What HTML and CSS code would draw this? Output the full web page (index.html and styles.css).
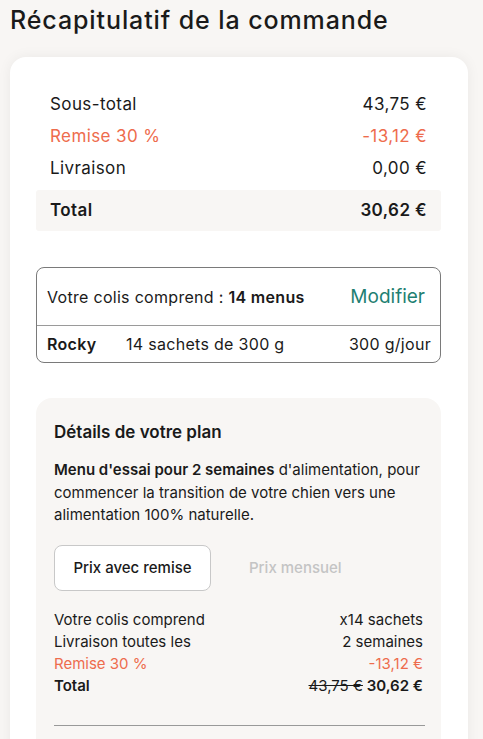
FILE: index.html
```html
<!DOCTYPE html>
<html lang="fr">
  <head>
    <meta charset="UTF-8" />
    <meta name="viewport" content="width=device-width, initial-scale=1.0" />
    <title>Récapitulatif de la commande</title>
    <link rel="stylesheet" href="styles.css">
  </head>
  <body>
    <div class="page">
      <h1 class="title">Récapitulatif de la commande</h1>

      <div class="summary">
        <div class="lines">
          <div class="line">
            <span>Sous-total</span>
            <span>43,75 €</span>
          </div>
          <div class="line discount">
            <span>Remise 30 %</span>
            <span>-13,12 €</span>
          </div>
          <div class="line">
            <span>Livraison</span>
            <span>0,00 €</span>
          </div>
        </div>
        <div class="total">
          <span>Total</span>
          <span>30,62 €</span>
        </div>

        <div class="parcel">
          <div class="parcel-head">
            <span>Votre colis comprend : <strong>14 menus</strong></span>
            <a href="#" class="edit">Modifier</a>
          </div>
          <div class="parcel-row">
            <strong class="dog">Rocky</strong>
            <span class="bags">14 sachets de 300 g</span>
            <span class="daily">300 g/jour</span>
          </div>
        </div>

        <div class="plan">
          <h2 class="plan-title">Détails de votre plan</h2>
          <p class="plan-text"><strong>Menu d'essai pour 2 semaines</strong> d'alimentation, pour commencer la transition de votre chien vers une alimentation 100% naturelle.</p>

          <div class="tabs">
            <button class="tab active">Prix avec remise</button>
            <button class="tab">Prix mensuel</button>
          </div>

          <div class="details">
            <div class="detail">
              <span>Votre colis comprend</span>
              <span>x14 sachets</span>
            </div>
            <div class="detail">
              <span>Livraison toutes les</span>
              <span>2 semaines</span>
            </div>
            <div class="detail discount">
              <span>Remise 30 %</span>
              <span>-13,12 €</span>
            </div>
            <div class="detail strong">
              <span>Total</span>
              <span><s class="old">43,75 €</s> 30,62 €</span>
            </div>
          </div>

          <hr class="divider" />
        </div>
      </div>
    </div>
  </body>
</html>
```

FILE: styles.css
```css
body {
  margin: 0;
  background-color: #f8f6f4;
  font-family: Inter, "Noto Sans", sans-serif;
  color: #1a1a1a;
}

.page {
  padding: 0 15px 0 10px;
}

.title {
  margin: 0;
  padding: 4px 0 21px;
  font-size: 25px;
  line-height: 32px;
  font-weight: 500;
  letter-spacing: 0.9px;
}

.summary {
  background-color: #fff;
  border-radius: 16px;
  box-shadow: 0 0 14px rgba(0, 0, 0, 0.06);
  padding: 31px 27px 40px 26px;
}

.lines {
  padding: 0 14px;
}

.line {
  display: flex;
  justify-content: space-between;
  height: 32px;
  line-height: 32px;
  font-size: 17px;
  letter-spacing: 0.4px;
}

.discount {
  color: #ee6c4d;
}

.total {
  display: flex;
  justify-content: space-between;
  margin-top: 6px;
  padding: 0 14px;
  height: 41px;
  line-height: 41px;
  background-color: #f8f6f4;
  border-radius: 3px;
  font-size: 17px;
  font-weight: 600;
  letter-spacing: 0.4px;
}

.parcel {
  margin-top: 36px;
  border: 1px solid #7a7a7a;
  border-radius: 8px;
  font-size: 16px;
  letter-spacing: 0.3px;
}

.parcel-head {
  display: flex;
  justify-content: space-between;
  align-items: center;
  height: 57px;
  padding: 0 15px 0 10px;
  border-bottom: 1px solid #9a9a9a;
}

.parcel-head strong {
  font-weight: 600;
}

.edit {
  color: #1f7f72;
  text-decoration: none;
  font-size: 19px;
  letter-spacing: 0;
}

.parcel-row {
  display: flex;
  align-items: center;
  height: 36px;
  padding: 0 9px 0 10px;
}

.dog {
  font-weight: 600;
  width: 79px;
}

.bags {
  flex: 1;
}

.plan {
  margin-top: 35px;
  background-color: #f8f6f4;
  border-radius: 16px;
  padding: 22px 16px 30px 18px;
}

.plan-title {
  margin: 0;
  font-size: 17px;
  line-height: 24px;
  font-weight: 600;
}

.plan-text {
  margin: 15px 0 0;
  font-size: 15px;
  line-height: 22.5px;
}

.plan-text strong {
  font-weight: 600;
}

.tabs {
  display: flex;
  align-items: center;
  gap: 20px;
  margin-top: 18px;
}

.tab {
  font-family: inherit;
  font-size: 15px;
  font-weight: 500;
  height: 46px;
  padding: 0 18px;
  border: none;
  background: none;
  color: #c4c4c4;
  cursor: pointer;
}

.tab.active {
  width: 157px;
  background-color: #fff;
  border: 1px solid #c8c8c8;
  border-radius: 8px;
  color: #1a1a1a;
}

.details {
  margin-top: 18px;
  padding-right: 2px;
  font-size: 15px;
  line-height: 22px;
}

.detail {
  display: flex;
  justify-content: space-between;
}

.detail.strong {
  font-weight: 600;
}

.old {
  font-weight: 400;
}

.divider {
  margin: 28px 0 0;
  border: none;
  border-top: 1px solid #999;
}
```
